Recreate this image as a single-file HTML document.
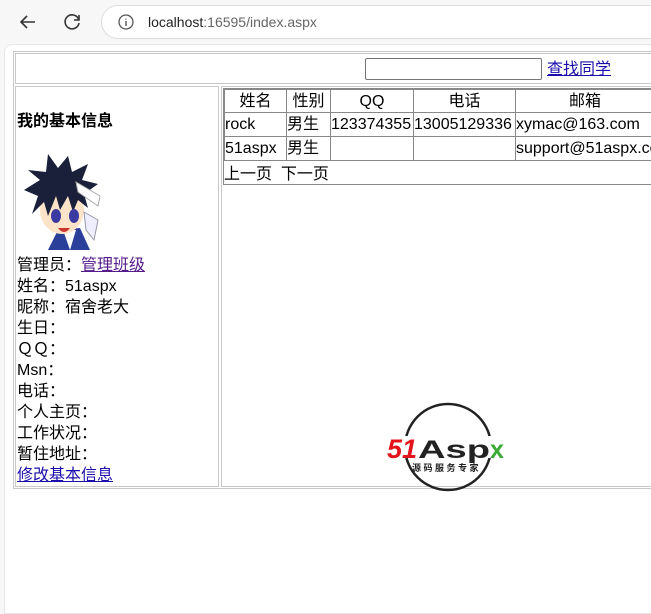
<!DOCTYPE html>
<html><head><meta charset="utf-8"><style>
*{margin:0;padding:0;box-sizing:border-box}
body{width:651px;height:599px;overflow:hidden;background:#f7f7f7;font-family:"Liberation Sans","Noto Sans CJK SC",sans-serif;position:relative;color:#000}
.a{position:absolute}
.t{font-size:16px;line-height:21px;white-space:nowrap}
.bl{border:1px solid #c8c8c8}
.c{position:absolute;border:1px solid #888;font-size:16px;line-height:24px;white-space:nowrap;overflow:hidden}
a{color:#1a0dab;text-decoration:underline}
</style></head><body>
<div class="a" style="left:0;top:0;width:651px;height:44px;background:#f7f7f7"></div>
<svg class="a" style="left:16px;top:10px" width="24" height="24" viewBox="0 0 24 24"><path d="M19 12H5M11 6l-6 6 6 6" fill="none" stroke="#333" stroke-width="1.6"/></svg>
<svg class="a" style="left:60px;top:10px" width="24" height="24" viewBox="0 0 24 24"><path d="M18.5 9A7 7 0 1 0 19 13" fill="none" stroke="#333" stroke-width="1.6"/><path d="M19 5v5h-5" fill="none" stroke="#333" stroke-width="1.6"/></svg>
<div class="a" style="left:101px;top:5px;width:600px;height:34px;border-radius:17px;background:#fff;border:1px solid #ddd"></div>
<svg class="a" style="left:117px;top:13px" width="18" height="18" viewBox="0 0 18 18"><circle cx="9" cy="9" r="7" fill="none" stroke="#555" stroke-width="1.3"/><path d="M9 8v5M9 5.5v1" stroke="#555" stroke-width="1.4"/></svg>
<div class="a" style="left:148px;top:13px;font-size:14px;line-height:18px;color:#222">localhost<span style="color:#666">:16595/index.aspx</span></div>
<div class="a" style="left:4px;top:44px;width:660px;height:570px;background:#fff;border-radius:8px 0 0 0;border:1px solid #e6e6e6"></div>
<div class="a bl" style="left:13px;top:51px;width:660px;height:438px"></div>
<div class="a bl" style="left:15px;top:53px;width:660px;height:31px"></div>
<div class="a" style="left:365px;top:58px;width:177px;height:22px;border:1px solid #767676;border-radius:2px"></div>
<div class="a t" style="left:547px;top:59px"><a>查找同学</a></div>
<div class="a bl" style="left:15px;top:86px;width:204px;height:401px"></div>
<div class="a bl" style="left:221px;top:86px;width:450px;height:401px"></div>
<div class="a t" style="left:17px;top:111px;font-weight:bold">我的基本信息</div>
<svg class="a" style="left:18px;top:150px" width="84" height="104" viewBox="0 0 84 104">
<path d="M30 100 L40 80 L62 78 L72 100Z" fill="#2a3f9a"/>
<path d="M45 80 L52 100 L58 80Z" fill="#fff"/>
<ellipse cx="44" cy="60" rx="22" ry="24" fill="#fde3c8"/>
<path d="M6 40 L22 30 L10 20 L28 22 L30 4 L40 18 L50 6 L54 22 L70 14 L64 30 L80 34 L66 44 L70 58 L60 50 L55 62 L50 46 L42 60 L38 46 L30 66 L26 52 L14 64 L20 46Z" fill="#1a1f3a"/>
<path d="M58 32 L82 46 L80 56 L60 42Z" fill="#fff" stroke="#aaa"/>
<ellipse cx="38" cy="66" rx="5" ry="7" fill="#3b3aa0"/><ellipse cx="56" cy="66" rx="5" ry="7" fill="#3b3aa0"/>
<path d="M40 78 Q46 86 52 78Z" fill="#c33"/>
<path d="M66 62 L80 70 L76 90 L68 80Z" fill="#eef" stroke="#99a"/>
</svg>
<div class="a t" style="left:17px;top:255px;line-height:21px">管理员：<a style="color:#551a8b">管理班级</a><br>姓名：51aspx<br>昵称：宿舍老大<br>生日：<br>ＱＱ：<br>Msn：<br>电话：<br>个人主页：<br>工作状况：<br>暂住地址：<br><a>修改基本信息</a></div>
<div class="a" style="left:223px;top:88px;width:440px;height:97px;border:1px solid #888"></div>
<div class="c" style="left:224px;top:89px;width:63px;height:24px;text-align:center">姓名</div>
<div class="c" style="left:286px;top:89px;width:45px;height:24px;text-align:center">性别</div>
<div class="c" style="left:330px;top:89px;width:84px;height:24px;text-align:center">QQ</div>
<div class="c" style="left:413px;top:89px;width:103px;height:24px;text-align:center">电话</div>
<div class="c" style="left:515px;top:89px;width:140px;height:24px;text-align:center">邮箱</div>
<div class="c" style="left:224px;top:112px;width:63px;height:25px">rock</div>
<div class="c" style="left:286px;top:112px;width:45px;height:25px">男生</div>
<div class="c" style="left:330px;top:112px;width:84px;height:25px">123374355</div>
<div class="c" style="left:413px;top:112px;width:103px;height:25px">13005129336</div>
<div class="c" style="left:515px;top:112px;width:140px;height:25px">xymac@163.com</div>
<div class="c" style="left:224px;top:136px;width:63px;height:25px">51aspx</div>
<div class="c" style="left:286px;top:136px;width:45px;height:25px">男生</div>
<div class="c" style="left:330px;top:136px;width:84px;height:25px"></div>
<div class="c" style="left:413px;top:136px;width:103px;height:25px"></div>
<div class="c" style="left:515px;top:136px;width:140px;height:25px">support@51aspx.com</div>
<div class="a t" style="left:224px;top:164px">上一页&nbsp;&nbsp;下一页</div>
<svg class="a" style="left:386px;top:400px" width="130" height="96" viewBox="0 0 130 96">
<circle cx="62" cy="47" r="43" fill="none" stroke="#222" stroke-width="2.5"/>
<rect x="0" y="36" width="130" height="22" fill="#fff"/>
<text x="1" y="58" font-family="Liberation Sans,sans-serif" font-weight="bold" font-style="italic" font-size="27" fill="#e3141b" textLength="30" lengthAdjust="spacingAndGlyphs">51</text>
<text x="32" y="58" font-family="Liberation Sans,sans-serif" font-weight="bold" font-size="25" fill="#222" textLength="72" lengthAdjust="spacingAndGlyphs">Asp</text>
<text x="104" y="58" font-family="Liberation Sans,sans-serif" font-weight="bold" font-size="25" fill="#3aa935">x</text>
<text x="26" y="71" font-family="Noto Sans CJK SC,sans-serif" font-size="9" font-weight="bold" fill="#222" letter-spacing="2.5">源码服务专家</text>
</svg>
</body></html>
